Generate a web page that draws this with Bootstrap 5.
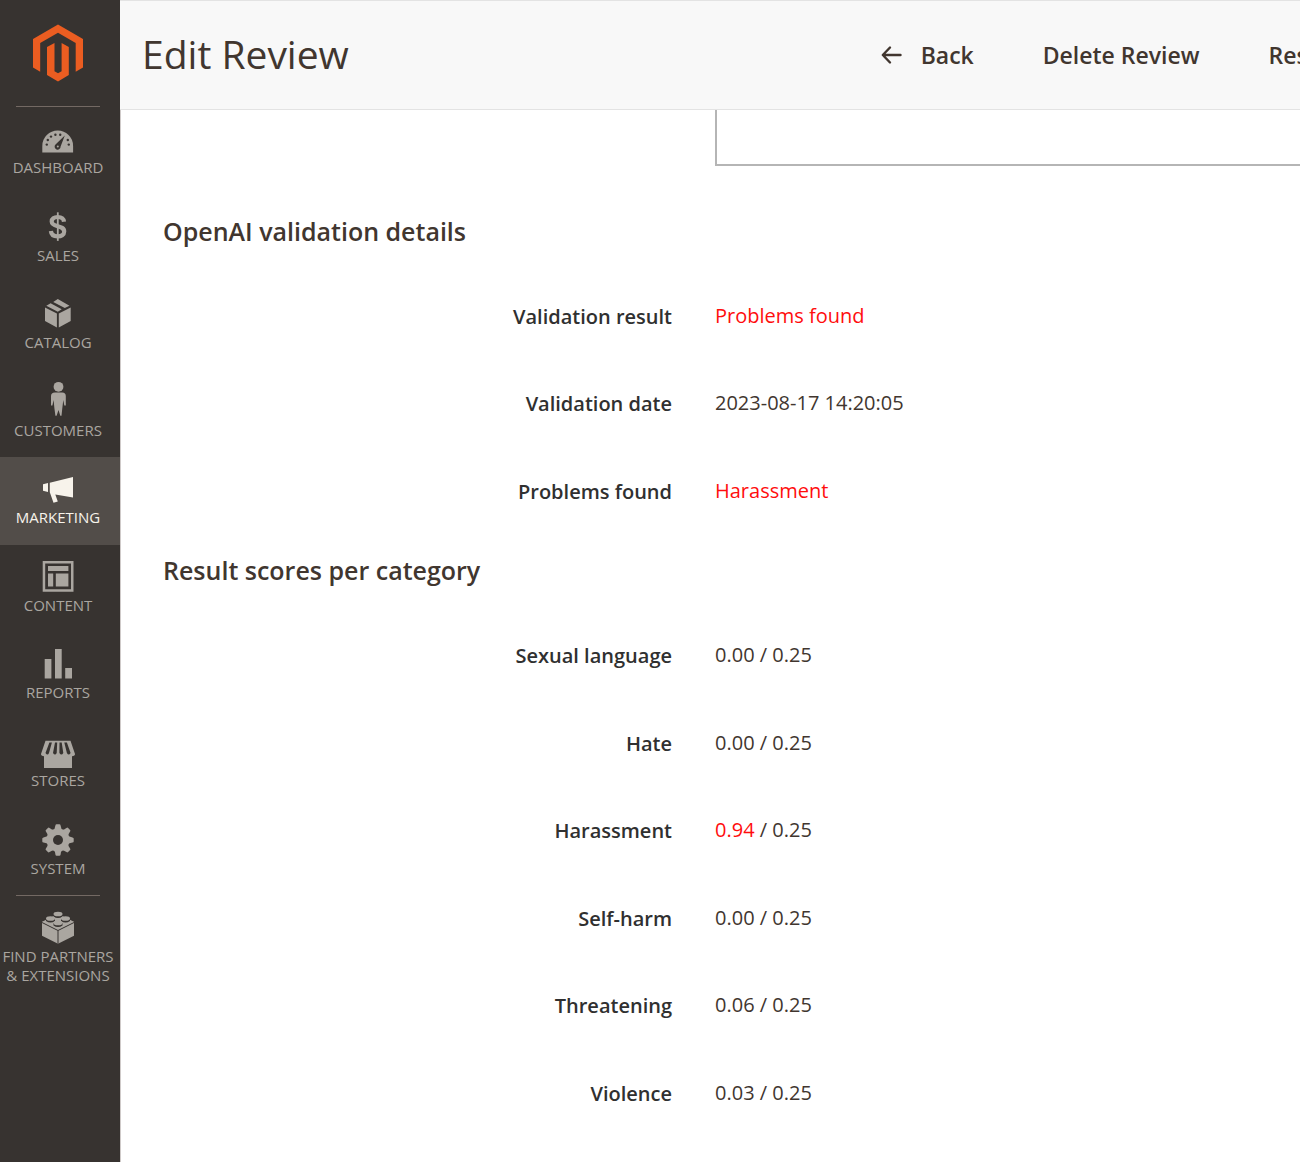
<!DOCTYPE html>
<html lang="en">
<head>
<meta charset="utf-8">
<meta name="viewport" content="width=device-width, initial-scale=1">
<title>Edit Review</title>
<link rel="stylesheet" href="https://cdn.jsdelivr.net/npm/bootstrap@5.3.0/dist/css/bootstrap.min.css">
<style>
body{font-family:"Open Sans","Noto Sans",sans-serif;color:#41362f;background:#fff;padding:0 4px 5px 0;min-height:100vh}
.admin-shell{min-height:calc(100vh - 5px);overflow:hidden}
.admin-menu{width:120px;background:#373330;box-shadow:1px 1px 0 #cfcac9}
.brand{height:106px;padding:24px 4px 0 0}
.rule{height:1px;margin:0 20px 0 16px;background:#736963}
.menu-items{height:788px}
.menu-link{padding:18px 4px 0 0;color:#aaa6a0;font-size:15px;line-height:19px;text-align:center;text-decoration:none;text-transform:uppercase}
.menu-link:hover,.menu-link.active{color:#f7f3eb}
.menu-link.active{background:#524d49}
.menu-link svg{width:40px;height:32px;margin-bottom:1px;overflow:visible;fill:currentColor}
.menu-link .cut{fill:#373330}
.page-head{height:110px;padding-left:22px;background:#f8f8f8;border-top:1px solid #e3e3e3;border-bottom:1px solid #e3e3e3;display:grid;grid-template-columns:738fr 419fr}
.page-head h1{font-size:39px;font-weight:400;line-height:54px;padding-bottom:2px}
.page-actions{min-width:0;gap:69px}
.action{border:0;background:none;padding:0;color:#41362f;font-size:23px;font-weight:600;line-height:32px;white-space:nowrap}
.review-form{padding-left:43px}
.field-row{display:grid;grid-template-columns:509fr 585fr;column-gap:43px;font-size:20px;line-height:28px}
.field-row dt{font-weight:600;color:#303030;text-align:right;padding-top:1px}
.field-row dd{margin:0;color:#41362f}
.field-row .fail{color:#ff0d0d}
.detail-field{height:56px;resize:none;border:2px solid #b5b5b5;border-width:0 0 2px 2px;border-radius:0;outline:0;padding:8px}
.review-form h2{font-size:25px;font-weight:600;line-height:34px;margin:0 0 25px}
.result-fields{display:grid;grid-auto-rows:1fr;margin:0}
.summary{height:262px;margin-bottom:18px}
.scores{height:525px}
</style>
<script src="https://cdn.jsdelivr.net/npm/bootstrap@5.3.0/dist/js/bootstrap.bundle.min.js"></script>
</head>
<body>
<div class="admin-shell d-flex">
  <nav class="admin-menu flex-shrink-0" aria-label="Main menu">
    <a class="brand d-block text-center" href="#" aria-label="Home">
      <svg width="50" height="58" viewBox="0 0 50 58" fill="#eb5d21"><path d="M25 0.500 50 15V43.500L42.700 47.700V19L25 8.800 7.200 19V47.700L0 43.500V15ZM21.500 19V47.200L25 49.200 28.600 47.200V19L35.800 23V51L25 57.500 14 51V23Z"/></svg>
    </a>
    <div class="rule"></div>
    <div class="menu-items d-flex flex-column">
      <a class="menu-link d-block flex-fill" href="#"><svg viewBox="0 0 40 32"><path d="M4.300 27.400V21a15.400 15.400 0 0 1 30.800 0v6.400Z"/><g class="cut"><circle cx="8.800" cy="19.600" r="1.200"/><circle cx="9.800" cy="15" r="1.200"/><circle cx="13" cy="11.600" r="1.200"/><circle cx="17.400" cy="9.800" r="1.200"/><circle cx="22.200" cy="9.800" r="1.200"/><circle cx="29.800" cy="15" r="1.200"/><circle cx="30.800" cy="19.600" r="1.200"/><path d="M26.800 10.500 22.600 21.500A3 3 0 1 1 17.500 19.500Z"/></g><circle cx="19.800" cy="21.600" r="1"/></svg><span class="d-block">Dashboard</span></a>
      <a class="menu-link d-block flex-fill" href="#"><svg viewBox="0 0 40 32"><path d="M26 8.800C25.700 5.300 23.200 4 19.700 4 16 4 13.700 5.700 13.700 8.400 13.700 14.800 26.200 11.500 26.200 18.600 26.200 21.900 23.300 23.400 19.700 23.400 15.800 23.400 13.200 21.700 12.900 18" fill="none" stroke="currentColor" stroke-width="4.200"/><path d="M18.900-.7h1.800v28.600h-1.800Z"/></svg><span class="d-block">Sales</span></a>
      <a class="menu-link d-block flex-fill" href="#"><svg viewBox="0 0 40 32"><path d="M7 7.500 18.900 13.400V27.400L7 21ZM32.700 7.500V21L20.800 27.400V13.400ZM8.300 5.700 12.600 3.300 23.700 9.200 19.800 11.700ZM15.200 1.900 19.800-1 31.500 5.700 26.800 7.900Z"/></svg><span class="d-block">Catalog</span></a>
      <a class="menu-link d-block flex-fill" href="#"><svg viewBox="0 0 40 32"><circle cx="20.500" cy="-1.200" r="4.900"/><path d="M17 4.500h7.200q3.600 0 3.600 3.500v9.500h-1.500l-1-5.500-1 8.200-.8 7.600h-1.200L20.500 22l-1.900 5.800h-1.200l-1-7.600-.8-8.200-1.200 5.500H13V8q0-3.500 4-3.500Z"/></svg><span class="d-block">Customers</span></a>
      <a class="menu-link active d-block flex-fill" href="#" aria-current="page"><svg viewBox="0 0 40 32"><path d="M35 2v20.600L17.300 19.500 19.800 26.600 15.500 27.700 11.800 17.300V7.700ZM5 9.300 10 8.100V16.900L5 15.700Z"/></svg><span class="d-block">Marketing</span></a>
      <a class="menu-link d-block flex-fill" href="#"><svg viewBox="0 0 40 32"><path fill-rule="evenodd" d="M4.700-2h30.800v30.800H4.700ZM7.200.5v25.800H33V.5Z"/><path d="M10 2.900h20.400v5H10ZM10 10.500h5.200v13H10ZM17.800 10.500h12.600v13H17.800Z"/></svg><span class="d-block">Content</span></a>
      <a class="menu-link d-block flex-fill" href="#"><svg viewBox="0 0 40 32"><path d="M6.700 9h6.700v19.500H6.700ZM17-1h6.700v29.500H17ZM27.200 18H34v10.500h-6.800Z"/></svg><span class="d-block">Reports</span></a>
      <a class="menu-link d-block flex-fill" href="#"><svg viewBox="0 0 40 32"><path d="M7.500 2.700h25L37 16q0 2-3 2.200v11.900H6V18.200Q3 18 3 16Z"/><g class="cut"><path d="M11.400 4.500h2.500L11 15q-1.400 3-3.500 0ZM17 4.500h2.200L18.700 15q-1.600 3-3.700 0ZM21.500 4.500h2.200L25.300 15q-1.900 3-3.900 0ZM26.300 4.500h2.600L32.600 15q-1.900 3-3.700 0Z"/></g></svg><span class="d-block">Stores</span></a>
      <a class="menu-link d-block flex-fill" href="#"><svg viewBox="-20 -14 40 32"><path id="gear-tooth" d="M-5-9.500Q-3-11-2.600-14.500Q-2.400-15.700-1.400-15.700H1.400Q2.400-15.700 2.600-14.500Q3-11 5-9.500Z"/><use href="#gear-tooth" transform="rotate(45)"/><use href="#gear-tooth" transform="rotate(90)"/><use href="#gear-tooth" transform="rotate(135)"/><use href="#gear-tooth" transform="rotate(180)"/><use href="#gear-tooth" transform="rotate(225)"/><use href="#gear-tooth" transform="rotate(270)"/><use href="#gear-tooth" transform="rotate(315)"/><circle r="11.200"/><circle class="cut" r="5"/></svg><span class="d-block">System</span></a>
    </div>
    <div class="rule"></div>
    <a class="menu-link d-block" href="#"><svg viewBox="0 0 40 32"><path d="M4 7.700 20 0 36 7.700V21.700L20 29.700 4 21.700Z"/><path d="M4 8.500 20 16.500 36 8.500M20 16.500V29.700" fill="none" stroke="#373330" stroke-width="1"/><g><path d="M15.500 0v2.500q4.500 3 9 0V0ZM8 4.500V7q4.500 3 9 0V4.500ZM23 4.500V7q4.500 3 9 0V4.500ZM15.500 9v2.500q4.500 3 9 0V9Z" class="cut"/><ellipse cx="20" cy="0" rx="4.500" ry="2.300"/><ellipse cx="12.500" cy="4.500" rx="4.500" ry="2.300"/><ellipse cx="27.500" cy="4.500" rx="4.500" ry="2.300"/><ellipse cx="20" cy="9" rx="4.500" ry="2.300"/></g></svg><span class="d-block">Find Partners<br>&amp; Extensions</span></a>
  </nav>
  <main class="flex-grow-1 overflow-hidden">
    <header class="page-head align-items-center overflow-hidden">
      <h1 class="m-0">Edit Review</h1>
      <div class="page-actions d-flex align-items-center">
        <button type="button" class="action d-flex align-items-center"><svg class="me-3" width="24" height="20" viewBox="0 0 24 20" fill="none" stroke="currentColor" stroke-width="2.400" stroke-linecap="round" stroke-linejoin="round"><path d="M9 2.500 1.800 10 9 17.500M2 10H19.500"/></svg>Back</button>
        <button type="button" class="action">Delete Review</button>
        <button type="button" class="action">Reset</button>
      </div>
    </header>
    <form class="review-form">
      <div class="field-row">
        <span></span>
        <textarea id="detail" class="detail-field w-100" aria-label="Review"></textarea>
      </div>
      <h2 class="mt-5">OpenAI validation details</h2>
      <dl class="result-fields summary">
        <div class="field-row align-content-center"><dt>Validation result</dt><dd class="fail">Problems found</dd></div>
        <div class="field-row align-content-center"><dt>Validation date</dt><dd>2023-08-17 14:20:05</dd></div>
        <div class="field-row align-content-center"><dt>Problems found</dt><dd class="fail">Harassment</dd></div>
      </dl>
      <h2>Result scores per category</h2>
      <dl class="result-fields scores">
        <div class="field-row align-content-center"><dt>Sexual language</dt><dd>0.00 / 0.25</dd></div>
        <div class="field-row align-content-center"><dt>Hate</dt><dd>0.00 / 0.25</dd></div>
        <div class="field-row align-content-center"><dt>Harassment</dt><dd><span class="fail">0.94</span> / 0.25</dd></div>
        <div class="field-row align-content-center"><dt>Self-harm</dt><dd>0.00 / 0.25</dd></div>
        <div class="field-row align-content-center"><dt>Threatening</dt><dd>0.06 / 0.25</dd></div>
        <div class="field-row align-content-center"><dt>Violence</dt><dd>0.03 / 0.25</dd></div>
      </dl>
    </form>
  </main>
</div>
</body>
</html>
